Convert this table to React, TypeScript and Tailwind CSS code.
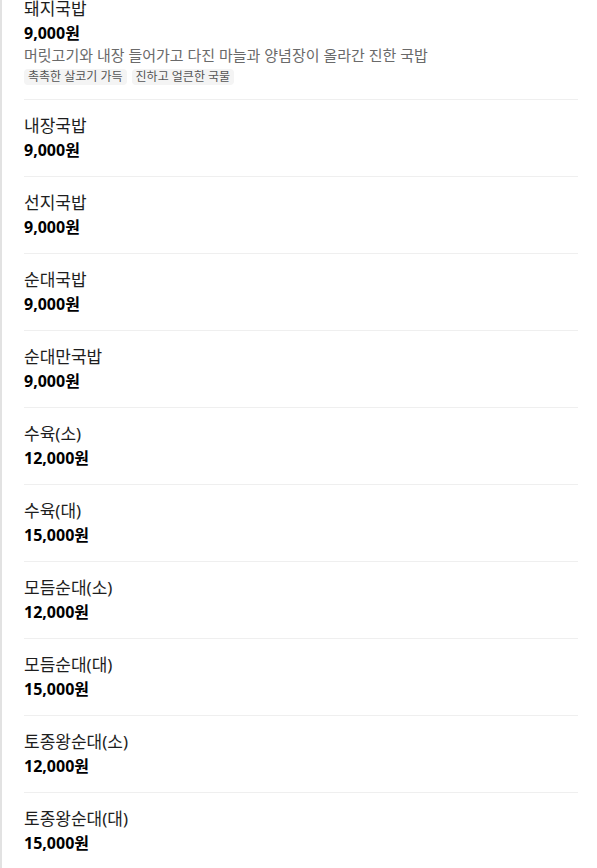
import React from "react";

interface MenuItem {
  name: string;
  price: string;
  desc?: string;
  tags?: string[];
}

const menuItems: MenuItem[] = [
  {
    name: "돼지국밥",
    price: "9,000원",
    desc: "머릿고기와 내장 들어가고 다진 마늘과 양념장이 올라간 진한 국밥",
    tags: ["촉촉한 살코기 가득", "진하고 얼큰한 국물"],
  },
  { name: "내장국밥", price: "9,000원" },
  { name: "선지국밥", price: "9,000원" },
  { name: "순대국밥", price: "9,000원" },
  { name: "순대만국밥", price: "9,000원" },
  { name: "수육(소)", price: "12,000원" },
  { name: "수육(대)", price: "15,000원" },
  { name: "모듬순대(소)", price: "12,000원" },
  { name: "모듬순대(대)", price: "15,000원" },
  { name: "토종왕순대(소)", price: "12,000원" },
  { name: "토종왕순대(대)", price: "15,000원" },
];

const MenuRow: React.FC<{ item: MenuItem }> = ({ item }) => (
  <li className="py-3.5">
    <p className="text-[17px] leading-6 text-[#1e1e1e]">{item.name}</p>
    <p className="text-base leading-6 font-bold text-black">{item.price}</p>
    {item.desc && (
      <p className="text-[15px] leading-5 text-[#6a6a6a]">{item.desc}</p>
    )}
    {item.tags && (
      <div className="mt-1 flex gap-[5px]">
        {item.tags.map((tag) => (
          <span
            key={tag}
            className="rounded bg-[#f4f4f4] px-1 text-xs leading-4 text-[#555]"
          >
            {tag}
          </span>
        ))}
      </div>
    )}
  </li>
);

export default function App() {
  return (
    <div
      className="min-h-[868px] overflow-hidden bg-white border-l-2 border-[#e2e2e2]"
      style={{ fontFamily: '"Noto Sans", "Noto Sans CJK KR", sans-serif' }}
    >
      <ul className="-mt-[17px] pl-[22px] pr-[19px] divide-y divide-[#efefef]">
        {menuItems.map((item) => (
          <MenuRow key={item.name} item={item} />
        ))}
      </ul>
    </div>
  );
}
